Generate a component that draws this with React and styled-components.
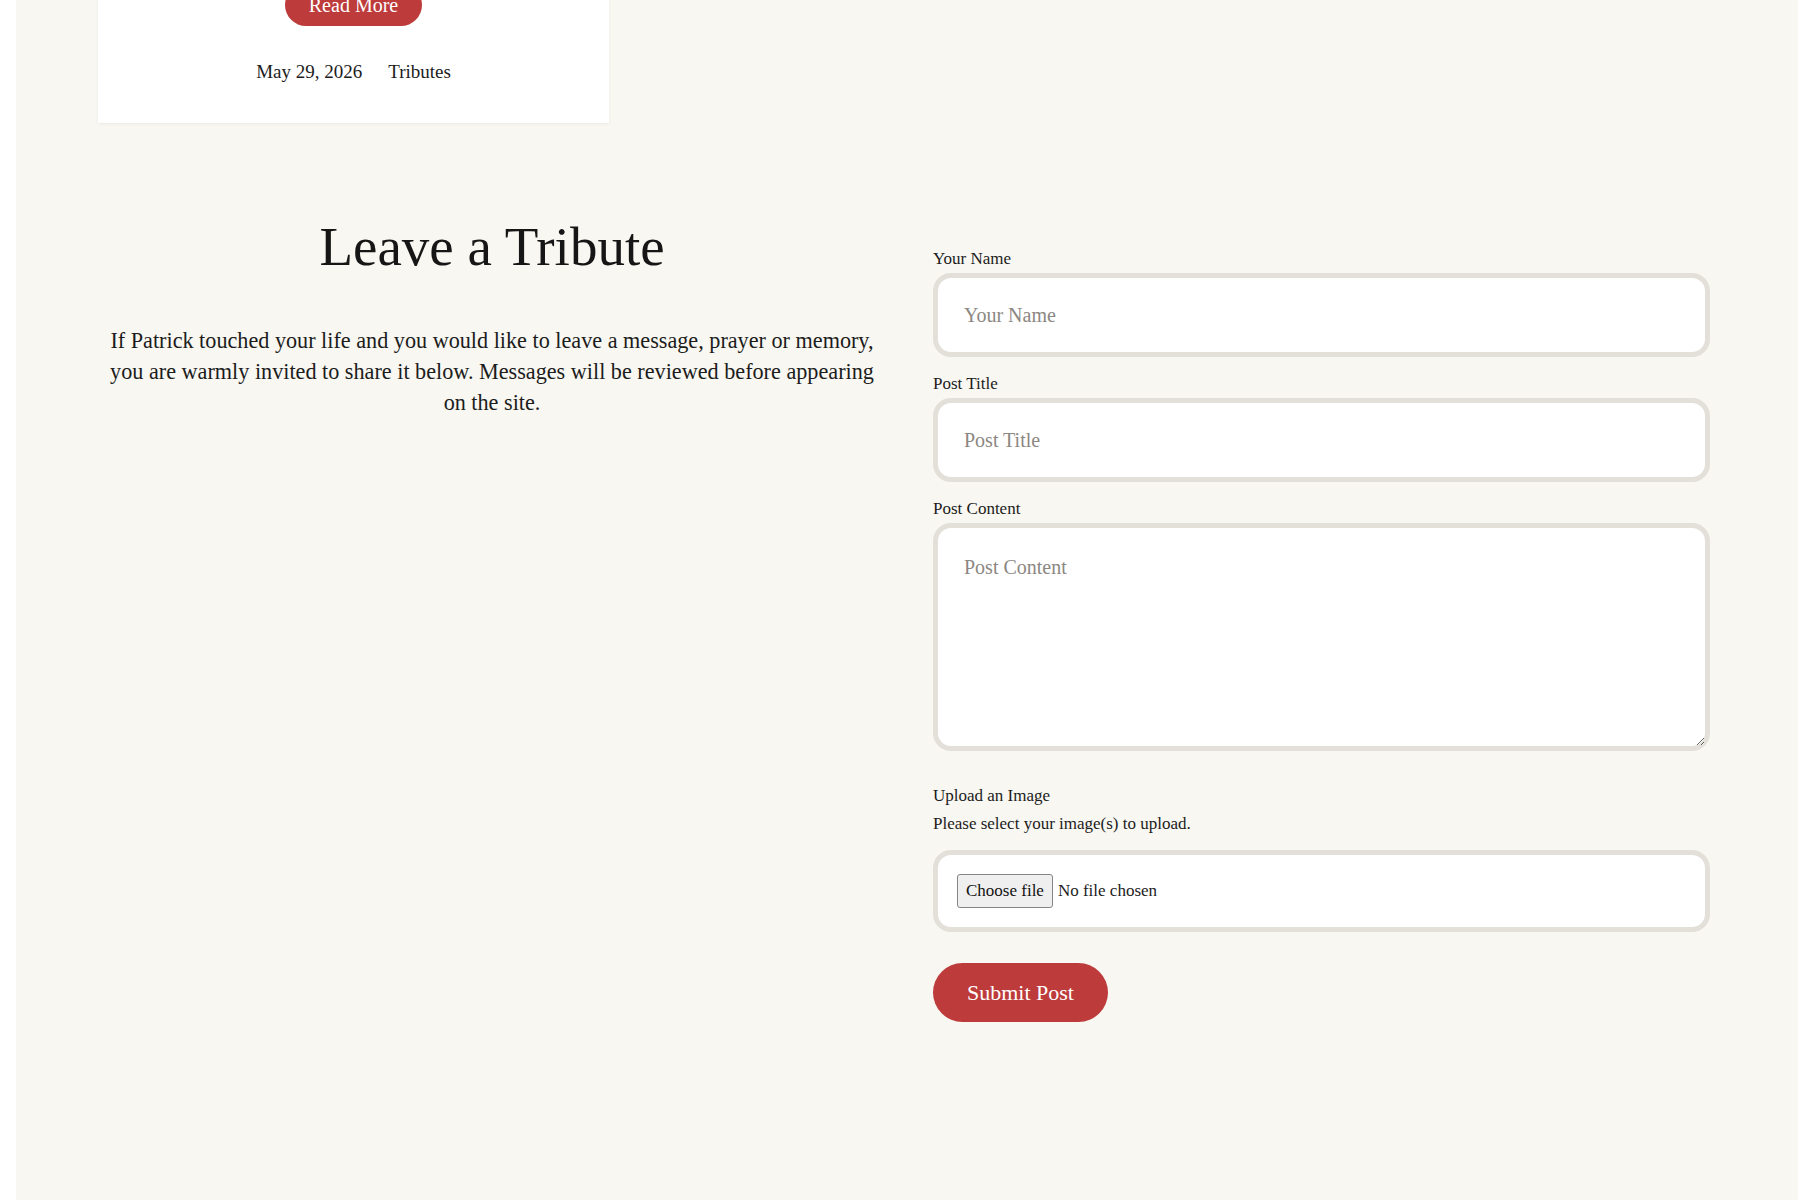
import styled, { createGlobalStyle } from 'styled-components'

const GlobalStyle = createGlobalStyle`
    html, body {
        margin     : 0;
        padding    : 0;
        background : #ffffff;
    }

    body {
        font-family : "Liberation Serif", "DejaVu Serif", serif;
        color       : #1c1c1c;
    }
`

const Panel = styled.div`
    display     : flow-root;
    min-height  : 100vh;
    margin      : 0 16px;
    background  : #f8f7f1;
    padding     : 0 82px;
`

const Card = styled.article`
    width          : 511px;
    margin-top     : -16px;
    padding-bottom : 38px;
    background     : #ffffff;
    box-shadow     : 0 1px 3px rgba(0, 0, 0, 0.06);
    display        : flex;
    flex-direction : column;
    align-items    : center;
`

const PillButton = styled.button`
    font-family   : inherit;
    font-size     : ${(p) => (p.large ? '22px' : '20px')};
    line-height   : 24px;
    height        : ${(p) => (p.large ? '59px' : '42px')};
    padding       : 0 ${(p) => (p.large ? '34px' : '24px')};
    color         : #ffffff;
    background    : #bd3b3b;
    border        : none;
    border-radius : 999px;
    cursor        : pointer;
`

const Meta = styled.div`
    display     : flex;
    gap         : 26px;
    margin-top  : 33px;
    font-size   : 19px;
    line-height : 26px;
    color       : #1c1c1c;
`

const Section = styled.section`
    display               : grid;
    grid-template-columns : 788px 777px;
    column-gap            : 47px;
    margin-top            : 93px;
    padding-bottom        : 120px;
`

const Intro = styled.div`
    text-align : center;
`

const Heading = styled.h2`
    margin      : -2px 0 0;
    font-size   : 55px;
    line-height : 66px;
    font-weight : 400;
    color       : #161616;
`

const Lead = styled.p`
    margin      : 45px 0 0;
    font-size   : 22.2px;
    line-height : 31px;
    color       : #1c1c1c;
`

const Form = styled.form`
    display        : flex;
    flex-direction : column;
    padding-top    : 33px;
`

const Label = styled.label`
    font-size     : 17px;
    line-height   : ${(p) => (p.tall ? '28px' : '20px')};
    margin-top    : ${(p) => p.gap || 0}px;
    margin-bottom : ${(p) => (p.tall ? 0 : 4)}px;
    color         : #1c1c1c;
`

const Help = styled.div`
    font-size   : 17px;
    line-height : 28px;
    color       : #1c1c1c;
`

const fieldBox = `
    box-sizing    : border-box;
    width         : 100%;
    background    : #ffffff;
    border        : 5px solid #e3dfd9;
    border-radius : 18px;
`

const Input = styled.input`
    ${fieldBox}
    height      : 84px;
    padding     : 0 26px;
    font-family : inherit;
    font-size   : 20px;
    color       : #1c1c1c;
    outline     : none;

    &::placeholder {
        color : #8c8782;
    }
`

const TextArea = styled.textarea`
    ${fieldBox}
    height      : 228px;
    padding     : 27px 26px;
    font-family : inherit;
    font-size   : 20px;
    line-height : 24px;
    color       : #1c1c1c;
    outline     : none;
    resize      : vertical;

    &::placeholder {
        color : #8c8782;
    }
`

const FileBox = styled.div`
    ${fieldBox}
    display     : flex;
    align-items : center;
    gap         : 5px;
    height      : 82px;
    margin-top  : 12px;
    padding     : 0 19px;
    font-size   : 17px;
    color       : #1c1c1c;

    input {
        display : none;
    }
`

const FileButton = styled.label`
    font-size     : 17px;
    line-height   : 20px;
    padding       : 6px 8px;
    color         : #111111;
    background    : #efefef;
    border        : 1px solid #858585;
    border-radius : 3px;
    cursor        : pointer;
`

const Actions = styled.div`
    margin-top : 31px;
`

export default function App() {
    return (
        <>
            <GlobalStyle />
            <Panel>
                <Card>
                    <PillButton type="button">Read More</PillButton>
                    <Meta>
                        <span>May 29, 2026</span>
                        <span>Tributes</span>
                    </Meta>
                </Card>

                <Section>
                    <Intro>
                        <Heading>Leave a Tribute</Heading>
                        <Lead>
                            If Patrick touched your life and you would like to leave a message, prayer or memory,
                            <br />
                            you are warmly invited to share it below. Messages will be reviewed before appearing
                            <br />
                            on the site.
                        </Lead>
                    </Intro>

                    <Form onSubmit={(e) => e.preventDefault()}>
                        <Label htmlFor="name">Your Name</Label>
                        <Input id="name" placeholder="Your Name" />

                        <Label htmlFor="title" gap={17}>Post Title</Label>
                        <Input id="title" placeholder="Post Title" />

                        <Label htmlFor="content" gap={17}>Post Content</Label>
                        <TextArea id="content" placeholder="Post Content" />

                        <Label htmlFor="images" gap={31} tall>Upload an Image</Label>
                        <Help>Please select your image(s) to upload.</Help>
                        <FileBox>
                            <input id="images" type="file" />
                            <FileButton htmlFor="images">Choose file</FileButton>
                            <span>No file chosen</span>
                        </FileBox>

                        <Actions>
                            <PillButton type="submit" large>Submit Post</PillButton>
                        </Actions>
                    </Form>
                </Section>
            </Panel>
        </>
    )
}
